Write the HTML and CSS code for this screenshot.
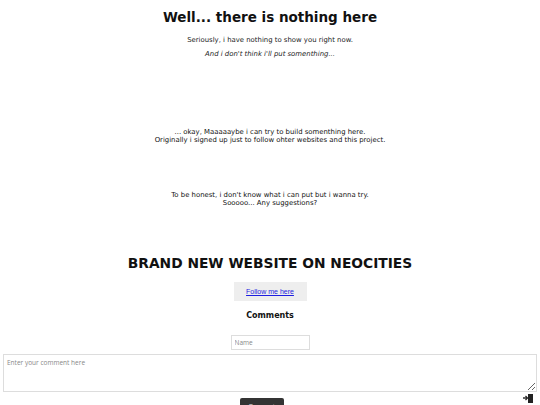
FILE: index.html
```html
<!DOCTYPE html>
<html lang="en">

<head>
    <meta charset="UTF-8">
    <meta name="viewport" content="width=device-width, initial-scale=1.0">
    <title>Nothing here</title>
    <link rel="stylesheet" href="styles.css">
</head>

<body>
    <header class="intro">
        <h1>Well... there is nothing here</h1>
        <p>Seriously, i have nothing to show you right now.</p>
        <p><em>And i don't think i'll put somenthing...</em></p>
    </header>

    <section class="story">
        <p>... okay, Maaaaaybe i can try to build somenthing here.<br>Originally i signed up just to follow ohter websites and this project.</p>
    </section>

    <section class="story second">
        <p>To be honest, i don't know what i can put but i wanna try.<br>Sooooo... Any suggestions?</p>
    </section>

    <section class="brand">
        <h2>BRAND NEW WEBSITE ON NEOCITIES</h2>
        <div class="follow"><a href="">Follow me here</a></div>
    </section>

    <section class="comments">
        <h3>Comments</h3>
        <form class="cform">
            <input type="text" placeholder="Name">
            <textarea placeholder="Enter your comment here"></textarea>
            <button type="button">Comment</button>
        </form>
    </section>

    <div class="corner">
        <svg width="11" height="10" viewBox="0 0 11 10">
            <path d="M0 5h4" stroke="#222" stroke-width="1.4" />
            <path d="M2.5 3l2 2-2 2" stroke="#222" stroke-width="1.2" fill="none" />
            <rect x="5" y="1" width="5" height="9" fill="#222" />
        </svg>
    </div>
</body>

</html>
```

FILE: styles.css
```css
* {
    margin: 0;
    padding: 0;
    box-sizing: border-box;
}

body {
    background: #fff;
    color: #111;
    font-family: "DejaVu Sans", Verdana, sans-serif;
    font-size: 6.9px;
    text-align: center;
}

.intro {
    padding-top: 8px;
}

.intro h1 {
    font-size: 13.5px;
    line-height: 19px;
    margin-bottom: 6px;
}

.intro p {
    line-height: 14px;
    color: #222;
}

.story {
    margin-top: 67px;
    line-height: 8px;
}

.story.second {
    margin-top: 47px;
}

.brand {
    margin-top: 46px;
}

.brand h2 {
    font-size: 13.8px;
    line-height: 20px;
}

.follow {
    width: 73px;
    height: 19px;
    margin: 9px auto 0;
    background: #eee;
    line-height: 19px;
    font-family: "Liberation Sans", Arial, sans-serif;
    font-size: 7px;
}

.follow a {
    color: #1d1de0;
}

.comments h3 {
    font-size: 8px;
    line-height: 12px;
    margin-top: 9px;
}

.cform {
    display: flex;
    flex-direction: column;
    align-items: center;
    padding: 0 3px;
}

.cform input {
    width: 79px;
    height: 15px;
    margin-top: 13px;
    border: 1px solid #ddd;
    padding: 0 3px;
    font-family: "Open Sans", sans-serif;
    font-size: 6.5px;
}

.cform textarea {
    width: 100%;
    height: 38px;
    margin-top: 4px;
    border: 1px solid #ddd;
    padding: 3px;
    font-family: "Open Sans", sans-serif;
    font-size: 6.5px;
}

.cform input::placeholder,
.cform textarea::placeholder {
    color: #888;
}

.cform button {
    width: 44px;
    height: 16px;
    margin-top: 6px;
    margin-left: -17px;
    background: #333;
    color: #fff;
    border: none;
    border-radius: 2px;
    font-size: 6px;
}

.corner {
    position: fixed;
    right: 6px;
    bottom: 0;
}
```
